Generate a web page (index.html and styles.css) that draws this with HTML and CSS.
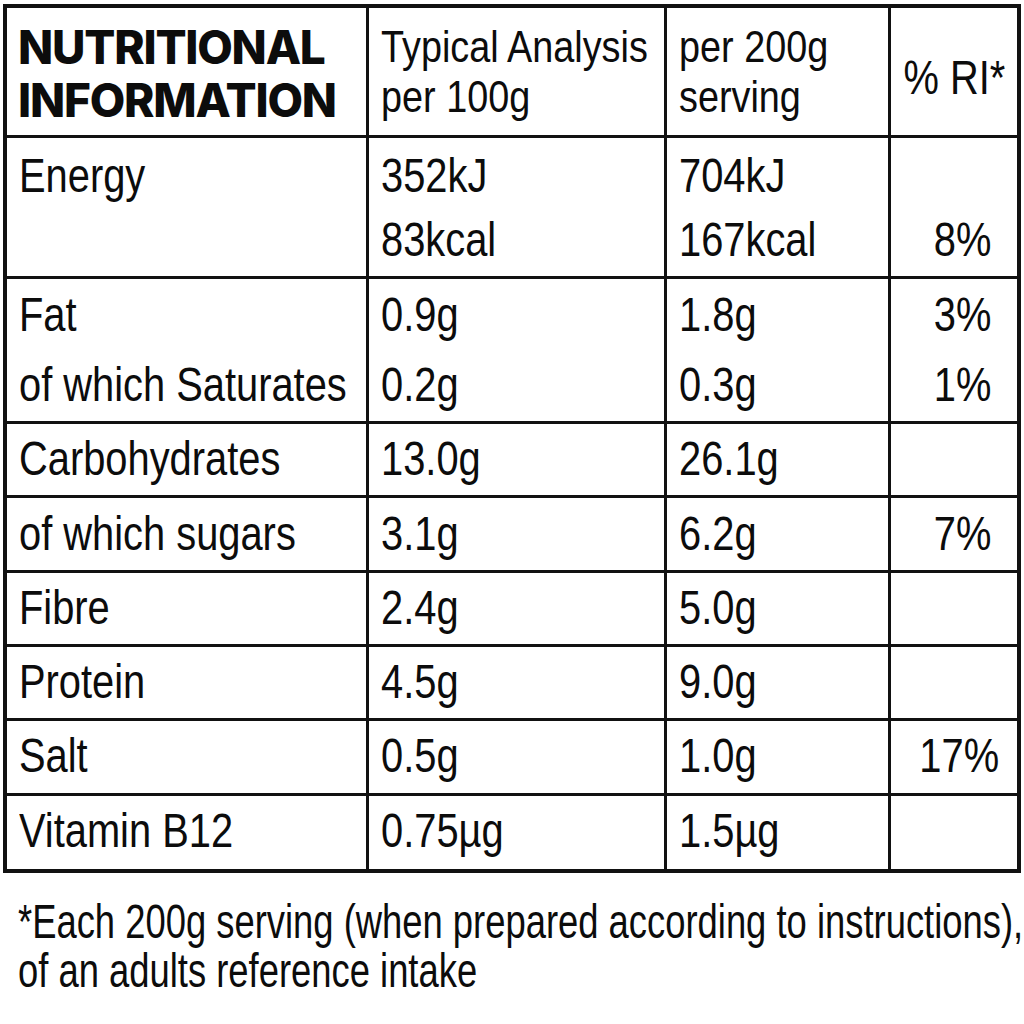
FILE: index.html
```html
<!DOCTYPE html>
<html lang="en">
<head>
<meta charset="utf-8">
<title>Nutritional Information</title>
<link rel="stylesheet" href="styles.css">
</head>
<body>
<div class="panel">
  <div class="grid">
    <div class="cell c1 head title"><div>NUTRITIONAL</div><div>INFORMATION</div></div>
    <div class="cell c2 head sub"><div><span class="t">Typical Analysis</span></div><div><span class="t">per 100g</span></div></div>
    <div class="cell c3 head sub"><div><span class="t">per 200g</span></div><div><span class="t">serving</span></div></div>
    <div class="cell c4 head ri"><span class="t">% RI*</span></div>

    <div class="cell c1 r-energy"><span class="t">Energy</span></div>
    <div class="cell c2 r-energy"><div><span class="t">352kJ</span></div><div><span class="t">83kcal</span></div></div>
    <div class="cell c3 r-energy"><div><span class="t">704kJ</span></div><div><span class="t">167kcal</span></div></div>
    <div class="cell c4 r-energy pct"><div>&nbsp;</div><div><span class="t">8%</span></div></div>

    <div class="cell c1 r-fat"><div><span class="t">Fat</span></div><div><span class="t">of which Saturates</span></div></div>
    <div class="cell c2 r-fat"><div><span class="t">0.9g</span></div><div><span class="t">0.2g</span></div></div>
    <div class="cell c3 r-fat"><div><span class="t">1.8g</span></div><div><span class="t">0.3g</span></div></div>
    <div class="cell c4 r-fat pct"><div><span class="t">3%</span></div><div><span class="t">1%</span></div></div>

    <div class="cell c1 r-one"><span class="t">Carbohydrates</span></div>
    <div class="cell c2 r-one"><span class="t">13.0g</span></div>
    <div class="cell c3 r-one"><span class="t">26.1g</span></div>
    <div class="cell c4 r-one pct"></div>

    <div class="cell c1 r-one r-sugar"><span class="t">of which sugars</span></div>
    <div class="cell c2 r-one r-sugar"><span class="t">3.1g</span></div>
    <div class="cell c3 r-one r-sugar"><span class="t">6.2g</span></div>
    <div class="cell c4 r-one r-sugar pct"><span class="t">7%</span></div>

    <div class="cell c1 r-one"><span class="t">Fibre</span></div>
    <div class="cell c2 r-one"><span class="t">2.4g</span></div>
    <div class="cell c3 r-one"><span class="t">5.0g</span></div>
    <div class="cell c4 r-one pct"></div>

    <div class="cell c1 r-one"><span class="t">Protein</span></div>
    <div class="cell c2 r-one"><span class="t">4.5g</span></div>
    <div class="cell c3 r-one"><span class="t">9.0g</span></div>
    <div class="cell c4 r-one pct"></div>

    <div class="cell c1 r-one r-salt"><span class="t">Salt</span></div>
    <div class="cell c2 r-one r-salt"><span class="t">0.5g</span></div>
    <div class="cell c3 r-one r-salt"><span class="t">1.0g</span></div>
    <div class="cell c4 r-one r-salt pct wide"><span class="t">17%</span></div>

    <div class="cell c1 r-one last"><span class="t">Vitamin B12</span></div>
    <div class="cell c2 r-one last"><span class="t">0.75µg</span></div>
    <div class="cell c3 r-one last"><span class="t">1.5µg</span></div>
    <div class="cell c4 r-one last pct"></div>
  </div>
  <div class="note">
    <div><span class="t">*Each 200g serving (when prepared according to instructions),</span></div>
    <div><span class="t">of an adults reference intake</span></div>
  </div>
</div>
</body>
</html>
```

FILE: styles.css
```css
html, body {
  margin: 0;
  padding: 0;
  background: #ffffff;
}

body {
  font-family: "Liberation Sans", Arial, sans-serif;
  font-size: 48px;
  color: #0c0c0c;
}

.panel {
  width: 1024px;
}

.t {
  display: inline-block;
  transform: scaleX(0.83);
  transform-origin: left center;
}

.grid {
  margin: 4px 0 0 3px;
  width: 1018px;
  box-sizing: border-box;
  border: 4px solid #111;
  display: grid;
  grid-template-columns: 362px 298px 224px 126px;
  grid-template-rows: 130px 141px 145px 74px 75px 74px 74px 75px 73px;
}

.cell {
  box-sizing: border-box;
  border-right: 3px solid #111;
  border-bottom: 3px solid #111;
  padding-left: 12px;
  line-height: 48px;
  white-space: nowrap;
}

.c4 {
  border-right: none;
}

.last {
  border-bottom: none;
}

.head {
  padding-top: 13px;
  line-height: 50px;
}

.sub {
  font-size: 45px;
  padding-top: 14px;
}

.sub .t {
  transform: scaleX(0.84);
}

.title {
  font-family: "Inter", "Liberation Sans", sans-serif;
  font-weight: 800;
  font-size: 46px;
  line-height: 53px;
  letter-spacing: -1.2px;
  padding-left: 11px;
}

.ri {
  padding-left: 0;
  text-align: center;
  padding-top: 46px;
  line-height: 48px;
}

.ri .t {
  transform-origin: center center;
}

.r-energy {
  padding-top: 6px;
  line-height: 64px;
}

.r-fat {
  padding-top: 1px;
  line-height: 70px;
}

.r-one {
  padding-top: 11px;
}

.r-sugar {
  padding-top: 12px;
}

.pct {
  padding-left: 0;
  text-align: right;
  padding-right: 26px;
}

.pct .t {
  transform-origin: right center;
}

.pct.wide {
  padding-right: 18px;
}

.note {
  margin: 24px 0 0 0;
  padding-left: 18px;
  line-height: 49px;
  white-space: nowrap;
}

.note .t {
  transform: scaleX(0.758);
}
```
